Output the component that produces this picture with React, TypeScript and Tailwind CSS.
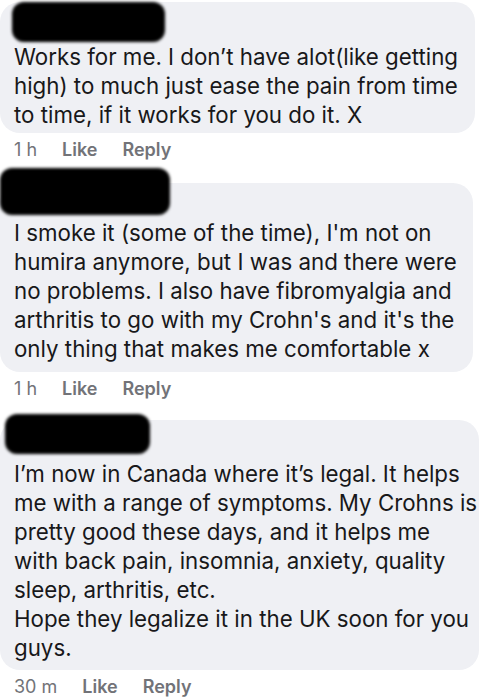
const comments = [
  {
    time: "1 h",
    lines: [
      "Works for me. I don\u2019t have alot(like getting",
      "high) to much just ease the pain from time",
      "to time, if it works for you do it. X",
    ],
    blob: "ml-[12px] w-[153px] h-[40px] mt-0",
    bubble: "mr-[4px] pb-[4px]",
    gap: "mb-[18px]",
  },
  {
    time: "1 h",
    lines: [
      "I smoke it (some of the time), I'm not on",
      "humira anymore, but I was and there were",
      "no problems. I also have fibromyalgia and",
      "arthritis to go with my Crohn's and it's the",
      "only thing that makes me comfortable x",
    ],
    blob: "ml-0 w-[170px] h-[47px] -mt-[15px] mb-[3px]",
    bubble: "mr-[6px] pb-[9px]",
    gap: "mb-[16px]",
  },
  {
    time: "30 m",
    lines: [
      "I\u2019m now in Canada where it\u2019s legal. It helps",
      "me with a range of symptoms. My Crohns is",
      "pretty good these days, and it helps me",
      "with back pain, insomnia, anxiety, quality",
      "sleep, arthritis, etc.",
      "Hope they legalize it in the UK soon for you",
      "guys.",
    ],
    blob: "ml-[5px] w-[145px] h-[40px] -mt-[6px] mb-[5px]",
    bubble: "mr-0 pb-[8px]",
    gap: "mb-0",
  },
];

export default function App() {
  return (
    <div className="w-[479px] h-[700px] bg-white overflow-hidden pt-[2px] font-['Inter',sans-serif]">
      {comments.map((c, i) => (
        <div key={i} className={c.gap}>
          <div className={`flow-root rounded-[20px] bg-[#eff0f4] ${c.bubble}`}>
            <div className={`bg-black rounded-[12px] blur-[1.5px] ${c.blob}`} />
            <div className="px-[14px] text-[22.3px] leading-[29px] text-[#18181a]">
              {c.lines.map((l, j) => (
                <div key={j} className="whitespace-nowrap">
                  {l}
                </div>
              ))}
            </div>
          </div>
          <div className="flex items-center gap-[25px] h-[32px] px-[14px] text-[18px] text-[#727378]">
            <span>{c.time}</span>
            <span className="font-semibold">Like</span>
            <span className="font-semibold">Reply</span>
          </div>
        </div>
      ))}
    </div>
  );
}
